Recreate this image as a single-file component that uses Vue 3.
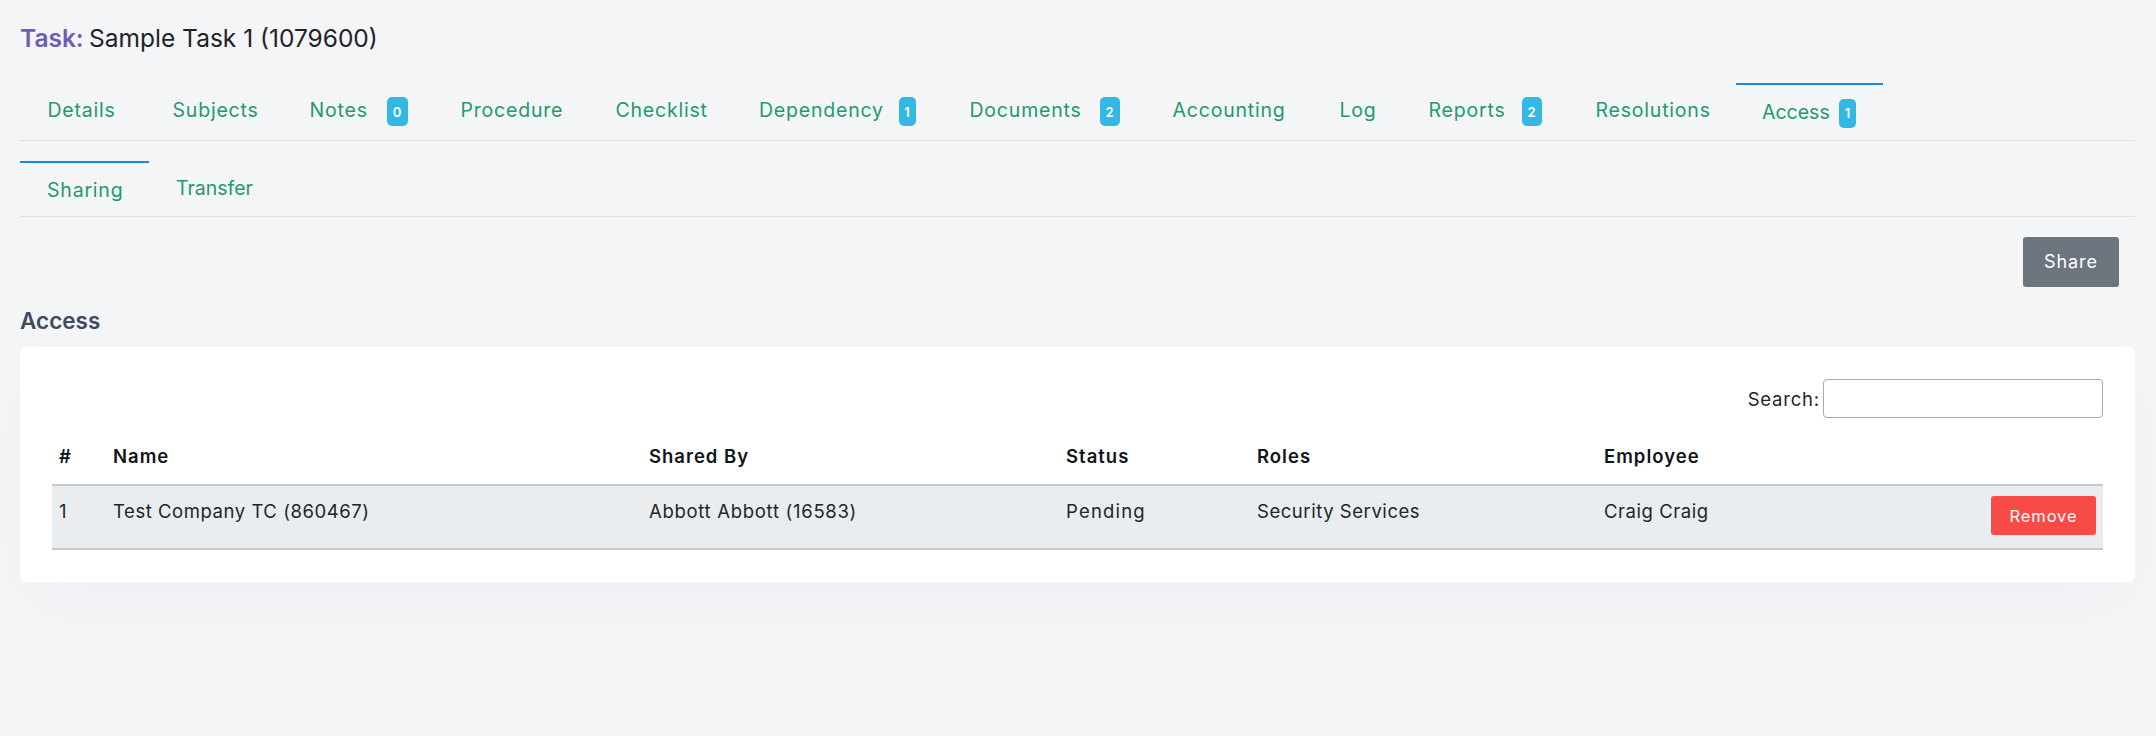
<script setup>
const tabs = [
  { name: 'Details', width: 125 },
  { name: 'Subjects', width: 137 },
  { name: 'Notes', width: 151, badge: 0, label: 77 },
  { name: 'Procedure', width: 155 },
  { name: 'Checklist', width: 143.5 },
  { name: 'Dependency', width: 210.5, badge: 1, label: 139.5 },
  { name: 'Documents', width: 203, badge: 2, label: 130 },
  { name: 'Accounting', width: 167 },
  { name: 'Log', width: 89 },
  { name: 'Reports', width: 167, badge: 2, label: 93 },
  { name: 'Resolutions', width: 168 },
  { name: 'Access', width: 147, badge: 1, label: 77, active: true, tight: true },
]
const subTabs = [
  { name: 'Sharing', width: 129, active: true },
  { name: 'Transfer', width: 120, tight: true },
]
const badgeWidths = { 0: 21, 1: 17, 2: 20 }
const columns = ['#', 'Name', 'Shared By', 'Status', 'Roles', 'Employee', '']
const row = [
  { text: '1' },
  { text: 'Test Company TC (860467)' },
  { text: 'Abbott Abbott (16583)', spacing: 0.7 },
  { text: 'Pending', spacing: 1.2 },
  { text: 'Security Services' },
  { text: 'Craig Craig' },
]
</script>

<template>
  <div class="page">
    <h1 class="title"><span class="title-key">Task:</span> Sample Task 1 (1079600)</h1>

    <nav class="tabs main-tabs">
      <a
        v-for="tab in tabs"
        :key="tab.name"
        class="tab"
        :class="{ active: tab.active, tight: tab.tight }"
        :style="{ width: tab.width + 'px' }"
      >
        <span class="tab-label" :style="tab.label ? { width: tab.label + 'px' } : null">{{ tab.name }}</span>
        <span
          v-if="tab.badge !== undefined"
          class="badge"
          :style="{ width: badgeWidths[tab.badge] + 'px' }"
        >{{ tab.badge }}</span>
      </a>
    </nav>

    <nav class="tabs sub-tabs">
      <a
        v-for="tab in subTabs"
        :key="tab.name"
        class="tab"
        :class="{ active: tab.active, tight: tab.tight }"
        :style="{ width: tab.width + 'px' }"
      >
        <span class="tab-label">{{ tab.name }}</span>
      </a>
    </nav>

    <div class="actions">
      <button class="btn-share" type="button">Share</button>
    </div>

    <h2 class="section-title">Access</h2>

    <section class="card">
      <div class="search-row">
        <label class="search-label" for="search">Search:</label>
        <input id="search" class="search-input" type="text" />
      </div>
      <table class="data-table">
        <colgroup>
          <col class="c1" /><col class="c2" /><col class="c3" /><col class="c4" /><col class="c5" /><col class="c6" /><col />
        </colgroup>
        <thead>
          <tr>
            <th v-for="(col, i) in columns" :key="i">{{ col }}</th>
          </tr>
        </thead>
        <tbody>
          <tr>
            <td
              v-for="cell in row"
              :key="cell.text"
              :style="cell.spacing ? { letterSpacing: cell.spacing + 'px' } : null"
            >{{ cell.text }}</td>
            <td class="cell-action"><button class="btn-remove" type="button">Remove</button></td>
          </tr>
        </tbody>
      </table>
    </section>
  </div>
</template>

<style>
html, body {
  margin: 0;
  background: #f4f5f7;
}
</style>

<style scoped>
.page {
  box-sizing: border-box;
  width: 2156px;
  min-height: 736px;
  padding: 0 21px 0 20px;
  font-family: Inter, "Open Sans", sans-serif;
  color: #212529;
  background: #f4f5f7;
}
.title {
  margin: 0;
  height: 83px;
  padding-top: 22px;
  box-sizing: border-box;
  font-size: 24.5px;
  line-height: 32px;
  font-weight: 400;
  letter-spacing: 0;
  color: #1f2328;
}
.title-key {
  margin-right: -1.5px;
  font-weight: 600;
  letter-spacing: 0;
  color: #6b5fb5;
}
.tabs {
  display: flex;
  border-bottom: 1px solid #dee0e4;
}
.main-tabs {
  margin-bottom: 20px;
}
.tab {
  box-sizing: border-box;
  display: flex;
  align-items: center;
  flex: none;
  height: 57px;
  padding: 0 0 3px 27.5px;
  font-size: 19.5px;
  letter-spacing: 0.8px;
  color: #23996f;
}
.tab.tight {
  letter-spacing: 0;
}
.tab.active {
  padding-bottom: 2px;
  border-top: 2px solid #1b87e0;
}
.main-tabs .tab.active {
  padding-left: 26px;
}
.sub-tabs {
  margin-bottom: 20px;
}
.sub-tabs .tab {
  height: 55px;
  padding-left: 27px;
}
.sub-tabs .tab.active {
  padding-bottom: 0;
}
.sub-tabs .tab:not(.active) {
  padding-bottom: 2px;
}
.tab-label {
  display: inline-block;
  flex: none;
}
.badge {
  display: flex;
  align-items: center;
  justify-content: center;
  box-sizing: border-box;
  height: 29px;
  margin-top: 3px;
  border-radius: 5px;
  background: #33b8e3;
  color: #fff;
  font-size: 13px;
  font-weight: 600;
  letter-spacing: 0;
}
.actions {
  display: flex;
  justify-content: flex-end;
  padding-right: 16px;
}
.btn-share {
  width: 96px;
  height: 50px;
  padding-bottom: 2px;
  border: 0;
  border-radius: 3px;
  background: #6c757d;
  color: #fff;
  font: 400 18px Inter, sans-serif;
  letter-spacing: 0.9px;
}
.section-title {
  margin: 0;
  height: 60px;
  box-sizing: border-box;
  padding-top: 20px;
  font-size: 22.5px;
  line-height: 28px;
  font-weight: 600;
  color: #3f4b5e;
}
.card {
  box-sizing: border-box;
  height: 235px;
  padding: 32px 32px 0;
  background: #fff;
  border-radius: 6px;
  box-shadow: 0 24px 70px rgba(40, 50, 70, 0.025);
}
.search-row {
  display: flex;
  justify-content: flex-end;
  align-items: center;
  gap: 3px;
  height: 39px;
}
.search-label {
  font-size: 18.5px;
  letter-spacing: 0.8px;
}
.search-input {
  box-sizing: border-box;
  width: 280px;
  height: 39px;
  border: 1px solid #a9a9a9;
  border-radius: 4px;
  background: #fff;
}
.data-table {
  width: 2051px;
  border-collapse: collapse;
  table-layout: fixed;
  font-size: 18.5px;
  letter-spacing: 0.55px;
}
.c1 { width: 54px; }
.c2 { width: 536px; }
.c3 { width: 417px; }
.c4 { width: 191px; }
.c5 { width: 347px; }
.c6 { width: 340px; }
th {
  height: 67px;
  box-sizing: border-box;
  padding: 10px 0 0 7px;
  text-align: left;
  font-weight: 600;
  letter-spacing: 1px;
  color: #111418;
  border-bottom: 2px solid #c6c9cc;
}
td {
  height: 64px;
  box-sizing: border-box;
  padding: 13px 0 0 7px;
  vertical-align: top;
  line-height: 24px;
  font-weight: 400;
  background: #eaedf0;
  border-bottom: 2px solid #c6c9cc;
}
td.cell-action {
  padding: 10px 7px 0 0;
  text-align: right;
}
.btn-remove {
  width: 105px;
  height: 39px;
  border: 0;
  border-radius: 3px;
  background: #f64b47;
  color: #fff;
  font: 400 16.5px Inter, sans-serif;
  letter-spacing: 0.9px;
}
</style>
